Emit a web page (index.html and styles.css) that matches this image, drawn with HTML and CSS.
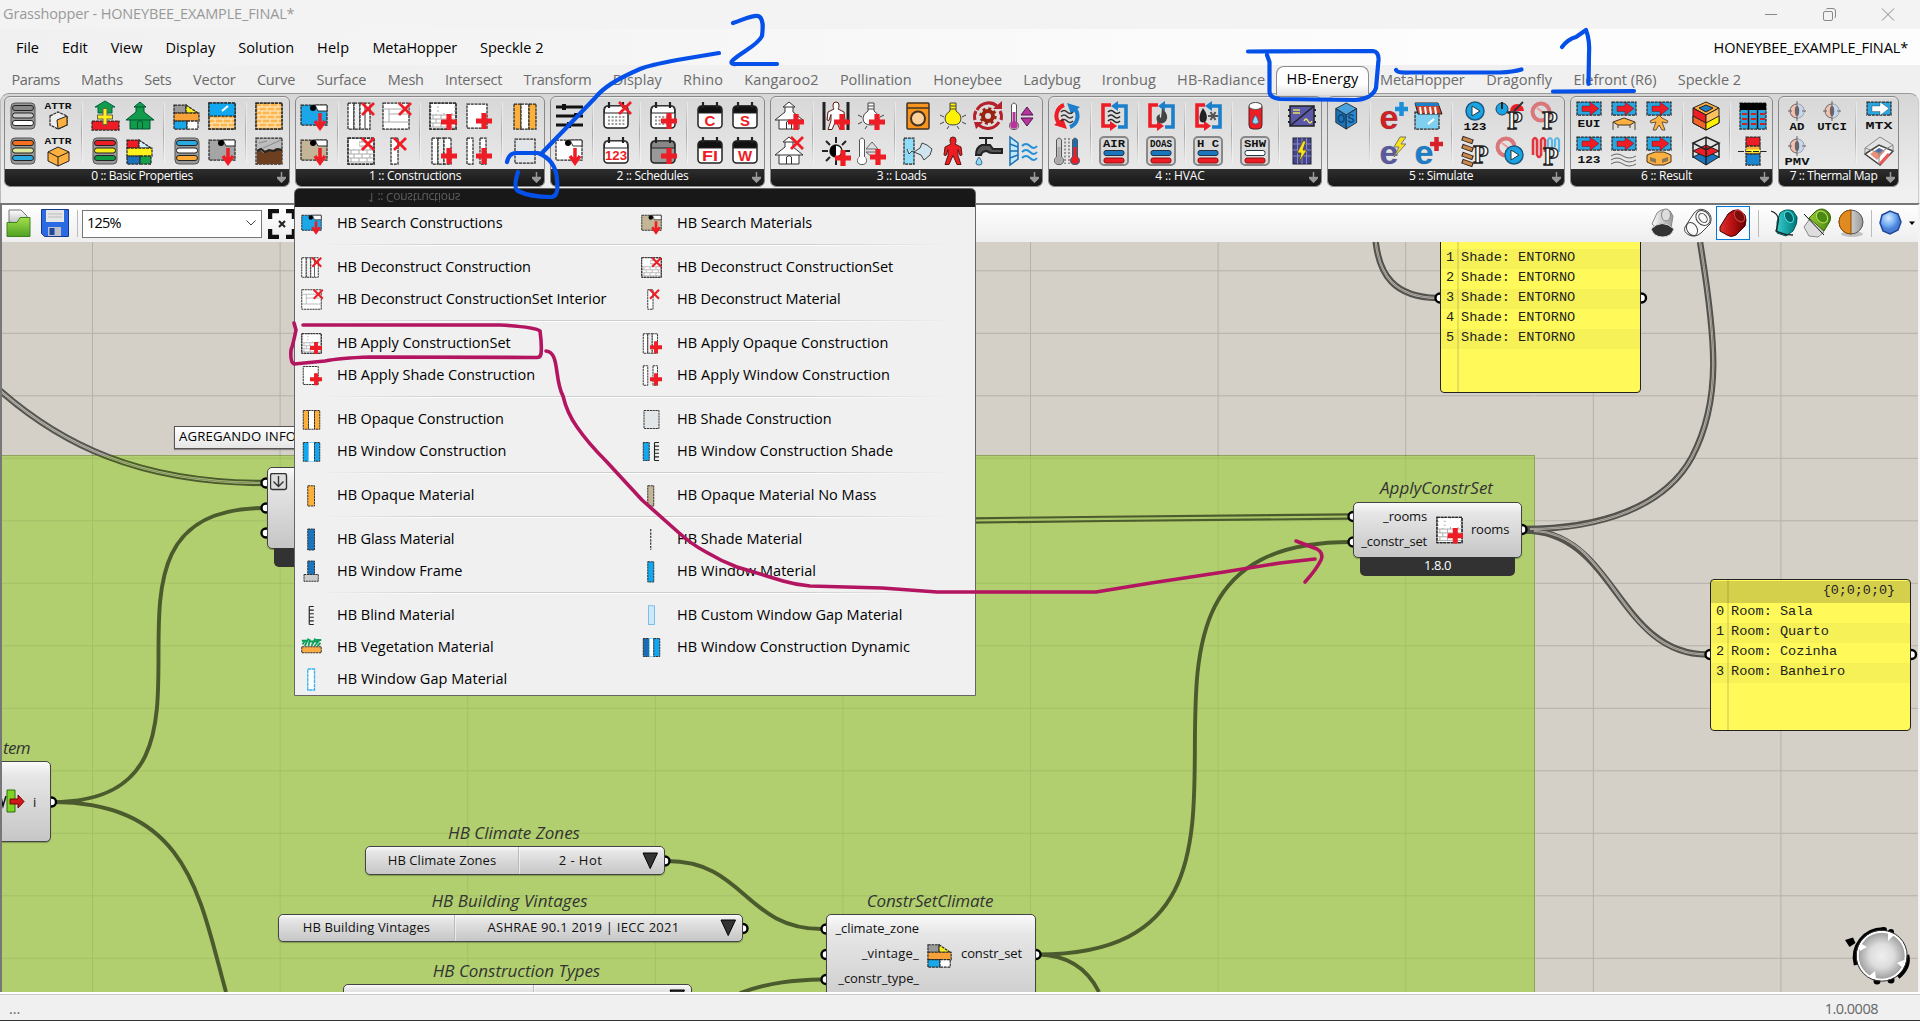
FILE: index.html
```html
<!DOCTYPE html>
<html lang="en">
<head>
<meta charset="utf-8">
<title>Grasshopper - HONEYBEE_EXAMPLE_FINAL*</title>
<link rel="stylesheet" href="styles.css">
</head>
<body>
<div class="window">
  <header class="titlebar">
    <span class="t" data-w="291">Grasshopper - HONEYBEE_EXAMPLE_FINAL*</span>
    <svg class="winbtns" viewBox="0 0 160 29"><path d="M5 14.500h12"/><rect x="63.500" y="11.500" width="9" height="9" rx="1.500"/><path d="M66 9.500q.5-1 2-1h5q2.500 0 2.500 2.500v5q0 1.500-1 2M122 8.500l12 12M134 8.500l-12 12"/></svg>
  </header>
  <nav class="menubar" id="menubar"></nav>
  <nav class="tabs" id="tabs"></nav>
  <section class="ribbon" id="ribbon"></section>

  <main class="editor">
    <div class="toolbar">
      <svg class="tb-left" viewBox="2 203 76 39">
        <defs><linearGradient id="gf" x2="0" y2="1"><stop stop-color="#a4e04c"/><stop offset="1" stop-color="#4ea024"/></linearGradient>
        <linearGradient id="gd" x2="0" y2="1"><stop stop-color="#fff"/><stop offset="1" stop-color="#bbb"/></linearGradient></defs>
        <path d="M9 222v-12h12l6 6v8z" fill="url(#gd)" stroke="#777"/><path d="M7 236.500v-14h10l3-5h10v19z" fill="url(#gf)" stroke="#3f8320"/>
        <path d="M41.500 209.500h27v27h-24l-3-3z" fill="#2a6be4" stroke="#15398f"/><path d="M46 210h18v12h-18z" fill="#e6e6e6"/><path d="M48 214h14M48 217h14" stroke="#bbb"/><path d="M48 227h13v9h-13z" fill="#bcc0c8"/><path d="M49.500 228h5v7h-5z" fill="#1d489f"/>
      </svg>
      <span class="rule"></span>
      <div class="combo"><span class="t" data-w="34">125%</span><svg viewBox="0 0 10 6"><path d="M.5.5l4.500 4.500 4.500-4.500"/></svg></div>
      <svg class="tb-extents" viewBox="0 0 28 30"><path d="M2 10V2h9M18 2h8v8M2 20v8h9M18 28h8v-8" fill="none" stroke="#111" stroke-width="4.500"/><path d="M11 12l6 6M17 12l-6 6" stroke="#222" stroke-width="2"/></svg>
      <svg class="tb-right" viewBox="1640 203 278 39">
        <defs>
          <linearGradient id="gr"><stop stop-color="#d33"/><stop offset=".4" stop-color="#c01414"/><stop offset="1" stop-color="#600"/></linearGradient>
          <linearGradient id="gt"><stop stop-color="#3cc"/><stop offset="1" stop-color="#077"/></linearGradient>
          <linearGradient id="gg"><stop stop-color="#9c3"/><stop offset="1" stop-color="#47830f"/></linearGradient>
          <linearGradient id="gw"><stop stop-color="#fff"/><stop offset="1" stop-color="#999"/></linearGradient>
          <radialGradient id="gb" cx=".4" cy=".3"><stop stop-color="#d5eaff"/><stop offset=".6" stop-color="#7db4f5"/><stop offset="1" stop-color="#4a7fd8"/></radialGradient>
        </defs>
        <path d="M1652 224l5-11q6-6 13-2l3 5-2 12-12 2z" fill="url(#gw)" stroke="#888"/><ellipse cx="1666" cy="215" rx="4.500" ry="6" fill="#ddd" stroke="#888"/><path d="M1651 229q11-11 23 0q-3 8-11.500 8t-11.500-8z" fill="#333" stroke="#ddd"/>
        <g fill="none" stroke="#444"><path d="M1685 227l9-14q6-7 14-1q5 5 2 12l-9 9q-6 5-12 2t-4-8z" fill="#fafafa"/><ellipse cx="1703" cy="218" rx="6.500" ry="8" transform="rotate(-40 1703 218)"/><ellipse cx="1703" cy="218" rx="3.500" ry="5" transform="rotate(-40 1703 218)"/><ellipse cx="1692" cy="229" rx="5" ry="7" transform="rotate(-30 1692 229)"/></g>
        <rect x="1716.500" y="206.500" width="33" height="33" fill="#f8fbff" stroke="#0078d7"/>
        <path d="M1720 227l8-13q5-5 11-4l6 5q2 5 0 11l-9 9q-5 3-9 0l-7-4z" fill="url(#gr)" stroke="#400"/><ellipse cx="1739.500" cy="216" rx="4.500" ry="6.500" transform="rotate(-35 1739.500 216)" fill="#7a0c0c" stroke="#d44"/>
        <path d="M1758.500 210v27M1871.500 210v27" stroke="#bbb"/>
        <path d="M1777 222l3-9q6-5 13-2l4 6q1 6-4 14l-7 5-9-3z" fill="url(#gt)" stroke="#055"/><ellipse cx="1789" cy="217" rx="4" ry="6" transform="rotate(-30 1789 217)" fill="#066" stroke="#4dd"/><path d="M1771 211q9 3 7 12t-2 8q8 4 17 4" fill="none" stroke="#222" stroke-width="1.300"/>
        <path d="M1804 227l7-10 13 15-6 5-9-1z" fill="#ddd" stroke="#888"/><path d="M1809 218l7-7q6-4 11 0 5 4 3 10l-6 10z" fill="url(#gg)" stroke="#360"/><ellipse cx="1822" cy="217" rx="5" ry="6.500" transform="rotate(-40 1822 217)" fill="#4a8a10" stroke="#bde06a"/><path d="M1804 214l20 21" stroke="#111"/>
        <ellipse cx="1852" cy="234" rx="11" ry="3" fill="#0003"/><circle cx="1851" cy="222" r="12" fill="url(#gw)" stroke="#555"/><path d="M1851 210a12 12 0 0 0 0 24z" fill="#e08a20" stroke="#8a4a00"/>
        <path d="M1882 215l8-4 8 3 3 8-3 8-8 4-7-3-3-8z" fill="url(#gb)" stroke="#1f4699" stroke-width="1.500"/><path d="M1909 221.500h6l-3 3.500z"/>
      </svg>
    </div>

    <div class="canvas">
      <svg class="wires" viewBox="2 242 1916 750">
        <defs>
          <pattern id="grid" x="92" y="207.800" width="187.600" height="62.500" patternUnits="userSpaceOnUse"><path d="M.5 0v62.500M0 .5h187.600" stroke="#00000026" fill="none"/></pattern>
          <linearGradient id="in" gradientUnits="userSpaceOnUse" x1="0" x2="0" y1="455" y2="456"><stop stop-color="#c5c1b9"/><stop offset="1" stop-color="#a8c568"/></linearGradient>
          <linearGradient id="out" gradientUnits="userSpaceOnUse" x1="0" x2="0" y1="455" y2="456"><stop stop-color="#565651"/><stop offset="1" stop-color="#4b5b2d"/></linearGradient>
          <radialGradient id="ball"><stop stop-color="#efefef"/><stop offset=".5" stop-color="#ddd"/><stop offset="1" stop-color="#9c9c9c"/></radialGradient>
        </defs>
        <rect x="0" y="455.500" width="1534.500" height="600" fill="#b1cf6e" stroke="#8ea45c"/>
        <rect x="0" y="242" width="1534" height="214" fill="url(#grid)"/><rect x="1535" y="242" width="390" height="760" fill="url(#grid)"/><rect x="0" y="456" width="1534" height="540" fill="url(#grid)" opacity=".5"/>
        <g class="single">
          <path d="M52 802C265 802 52 508 265 508M52 802C190 802 200 900 226 992M1038 954.500C1350 954.500 1040 542 1351 542M1038 954.500C1070 955 1088 970 1099 992M667 861C745 861 745 929 822 929M740 993C770 982 795 980 822 979.500"/>
        </g>
        <g class="dbl">
          <g stroke="url(#out)"><path d="M-5 386C60 445 140 483 265 483"/></g><g class="inner" stroke="url(#in)"><path d="M-5 386C60 445 140 483 265 483"/></g>
          <path d="M970 520.500C1100 519 1200 517.500 1351 516.500" stroke="#4b5b2d"/><path class="inner" d="M970 520.500C1100 519 1200 517.500 1351 516.500" stroke="#a8c568"/>
          <g stroke="#53524d"><path d="M1524 529C1600 529 1665 507 1692 457C1722 400 1716 340 1700 242M1524 530.500C1615 530 1617 654 1707 654.500M1375.500 240C1379 275 1394 297 1437 298"/></g>
          <g class="inner" stroke="#bdb9b1"><path d="M1530 529C1600 529 1665 507 1692 457C1722 400 1716 340 1700 242M1534 531C1615 534 1617 654 1707 654.500M1375.500 240C1379 275 1394 297 1437 298"/></g>
          <g class="core" stroke="#7d7a74"><path d="M1530 529C1600 529 1665 507 1692 457C1722 400 1716 340 1700 242M1534 531C1615 534 1617 654 1707 654.500M1375.500 240C1379 275 1394 297 1437 298M-5 386C60 445 140 483 265 483"/></g>
        </g>
        <g class="ports">
          <circle cx="266" cy="483" r="4.500"/><circle cx="266" cy="508" r="4.500"/><circle cx="266" cy="533" r="4.500"/><circle cx="51.500" cy="802" r="4.500"/>
          <circle cx="1353" cy="516.500" r="4.500"/><circle cx="1353" cy="542" r="4.500"/><circle cx="1522" cy="529.500" r="4.500"/>
          <circle cx="1440" cy="298" r="4.500"/><circle cx="1641.500" cy="298" r="4.500"/><circle cx="1710" cy="654.500" r="4.500"/><circle cx="1911.500" cy="654.500" r="4.500"/>
          <circle cx="826" cy="929" r="4.500"/><circle cx="826" cy="954.500" r="4.500"/><circle cx="826" cy="979.500" r="4.500"/><circle cx="1036" cy="954.500" r="4.500"/>
          <circle cx="665" cy="861" r="4.500"/><circle cx="743" cy="928.500" r="4.500"/>
        </g>
        <path d="M1845 940l8-2.500 2.500 5.500-6 4z"/><path d="M1856 965a28 28 0 0 1 28-35.500M1907 955q3 12-9 22" fill="none" stroke="#000" stroke-width="4.500"/><circle cx="1884" cy="930" r="3"/><circle cx="1891" cy="932" r="3"/><circle cx="1877" cy="981" r="3.500"/><circle cx="1891" cy="980" r="3.500"/>
        <circle cx="1881.700" cy="955.700" r="24" fill="url(#ball)" stroke="#fff" stroke-width="2"/><circle cx="1881.700" cy="955.700" r="25.500" fill="none" stroke="#333"/>
        <path d="M1888 932l6 3-6 6zM1860 943l7 4-7 4zM1904 960l-7 3 6 5zM1875 971l1 8-7-3z" fill="#fff"/>
      </svg>

      <div class="scribble">AGREGANDO INFORMACION</div>

      <div class="node item"><span class="nick t" data-w="27">tem</span>
        <svg viewBox="0 0 24 26"><path d="M0 8l2 9 3-10" fill="none" stroke="#111" stroke-width="1.500"/><path d="M6 1h8v22h-8z" fill="#7fd321" stroke="#2f6d10"/><path d="M9 10h8v-4l6 6.500-6 6.500v-4h-8z" fill="#d01818" stroke="#700"/></svg><span>i</span></div>

      <div class="node merge"><svg viewBox="0 0 18 18"><rect x=".5" y=".5" width="16" height="16" rx="2"/><path d="M8.500 3v10M3.500 8.500l5 5 5-5"/></svg><div class="version"></div></div>

      <div class="node apply">
        <span class="nick t" data-w="113">ApplyConstrSet</span>
        <div class="inputs"><span class="t" data-w="44">_rooms</span><span class="t" data-w="66">_constr_set</span></div>
        <svg class="nodeicon" viewBox="0 0 28 28" data-icon="appCS"></svg>
        <span class="t out" data-w="38">rooms</span>
        <div class="version"><span class="t" data-w="27">1.8.0</span></div>
      </div>

      <div class="node climate">
        <span class="nick t" data-w="127">ConstrSetClimate</span>
        <div class="inputs"><span class="t" data-w="84">_climate_zone</span><span class="t" data-w="57">_vintage_</span><span class="t" data-w="81">_constr_type_</span></div>
        <svg class="nodeicon" viewBox="0 0 28 28" data-icon="blocks"></svg>
        <span class="t" data-w="61">constr_set</span>
      </div>

      <div class="node list zones"><span class="nick t" data-w="132">HB Climate Zones</span><span class="name"><span class="t" data-w="108">HB Climate Zones</span></span><span class="value"><span class="t" data-w="43">2 - Hot</span></span><svg viewBox="0 0 17 18"><path d="M1 1h14.500l-7.300 15.500z"/></svg></div>
      <div class="node list vintages"><span class="nick t" data-w="156">HB Building Vintages</span><span class="name"><span class="t" data-w="127">HB Building Vintages</span></span><span class="value"><span class="t" data-w="192">ASHRAE 90.1 2019 | IECC 2021</span></span><svg viewBox="0 0 17 18"><path d="M1 1h14.500l-7.300 15.500z"/></svg></div>
      <div class="node list types"><span class="nick t" data-w="167">HB Construction Types</span><span class="name"></span><span class="value"></span><svg viewBox="0 0 17 18"><path d="M1 1h14.500l-7.300 15.500z"/></svg></div>

      <div class="panel shades">
        <div class="row"><i>1</i><span>Shade: ENTORNO</span></div><div class="row"><i>2</i><span>Shade: ENTORNO</span></div><div class="row"><i>3</i><span>Shade: ENTORNO</span></div><div class="row"><i>4</i><span>Shade: ENTORNO</span></div><div class="row"><i>5</i><span>Shade: ENTORNO</span></div>
      </div>
      <div class="panel rooms">
        <div class="path">{0;0;0;0}</div>
        <div class="row"><i>0</i><span>Room: Sala</span></div><div class="row"><i>1</i><span>Room: Quarto</span></div><div class="row"><i>2</i><span>Room: Cozinha</span></div><div class="row"><i>3</i><span>Room: Banheiro</span></div>
      </div>
    </div>
  </main>

  <footer class="status"><span>...</span><span class="t" data-w="53">1.0.0008</span></footer>

  <div class="dropdown">
    <div class="head"><span class="t" data-w="92">1 :: Constructions</span></div>
    <div id="items"></div>
  </div>

  <svg class="ink" viewBox="0 0 1920 1021">
    <g class="blue">
      <path d="M733 23C745 19 752 15 758 16C764 18 763 28 762 36C758 45 742 52 733 60C730 63 732 64.500 736 64L777 64"/>
      <path d="M719 53L677 60Q650 65 640 69C615 80 603 88 595 98L541 154"/>
      <path d="M507 162Q509 153 516 153L538 153Q556 160 557 180Q559 197 551 197Q530 197 518 191Q513 188 518 172"/>
      <path d="M1248 51.500L1373 51Q1379 52 1378.500 60L1376 88Q1372 99 1355 100L1280 99Q1270 98 1269.500 92L1269.500 62L1267 55"/>
      <path d="M1396 70Q1397 73 1410 72.500L1500 72.500Q1513 72 1521.500 69.500"/><path d="M1562 47Q1568 39 1576 37L1586 30Q1590 40 1589 55L1588.500 84"/><path d="M1553 91.500L1634 91"/>
    </g>
    <g class="pink">
      <path d="M303 325L500 325Q535 327 540 331Q542 345 541 354Q540 358 536 357.500L370 357Q340 358 325 361L294 364Q290 362 291 350Q293 345 296 330L294 323"/>
      <path d="M546 351C560 352 554 380 563 396Q567 413 577 427Q588 443 606 461L642 500L678 532Q691 544 706 552Q721 561 737 567L783 581Q797 585 810 586L882 588L937 592L1096 592L1151 583L1224 572L1280 563L1315 559"/>
      <path d="M1296 541L1317 549Q1324 553 1321 560Q1316 570 1305 582"/>
    </g>
  </svg>
</div>
<script src="app.js"></script>
</body>
</html>
```
FILE: styles.css
```css
* { box-sizing: border-box; }
body { margin: 0; overflow: hidden; background: #f0f0f0; font: 14.5px/20px "Open Sans", "Noto Sans", sans-serif; color: #000; }
.window { position: relative; width: 1920px; height: 1021px; display: flex; flex-direction: column; overflow: hidden; }
.t { display: inline-block; white-space: nowrap; }

.titlebar { height: 29px; display: flex; justify-content: space-between; padding: 4px 0 0 3px; background: #f3f3f3; color: #999; }
.winbtns { width: 160px; height: 29px; margin-top: -4px; fill: none; stroke: #888; }
.menubar { height: 36px; display: flex; gap: 23px; padding: 9px 12px 0 16px; background: linear-gradient(90deg, #f0f0f0, #fdfdfd 75%); }
.menubar .t:last-child { margin-left: auto; }
.tabs { height: 28px; display: flex; padding-left: 1px; color: #6b6b6b; }
.tabs .tab { height: 28px; padding: 5px 0 0; text-align: center; white-space: nowrap; }
.tabs .on { position: relative; z-index: 1; height: 29px; padding-top: 2px; margin-top: 1px; color: #000; background: linear-gradient(#fff 60%, #e2e2e2); border: 1px solid #8c8c8c; border-bottom: 0; border-radius: 8px 8px 0 0; }

.ribbon { height: 110px; display: flex; gap: 5px; padding: 2px 4px 0 3px; border: 1px solid #999; border-bottom: 0; border-left-color: #bbb; border-right-color: #ccc; border-radius: 9px 9px 0 0; margin: 0 1px 0 0; background: linear-gradient(#d6d6d6, #f0f0f0 90%); align-items: flex-start; }
.group { height: 91px; display: flex; flex-direction: column; border: 1px solid #888; border-radius: 6px; overflow: hidden; background: linear-gradient(#d8d8d8, #ececec); box-shadow: inset 0 1px #fff8; flex: none; }
.icons { height: 73px; display: flex; gap: 12px; padding: 1px 1px 0 0; }
.cluster { display: grid; grid-template-rows: 35px 35px; grid-auto-columns: 35px; grid-auto-flow: column; place-items: center; position: relative; }
.cluster + .cluster::before { content: ""; position: absolute; left: -6px; top: 4px; width: 1px; height: 62px; background: linear-gradient(#0000, #aaa, #0000); box-shadow: 1px 0 #fff6; }
.cluster svg { width: 28px; height: 28px; overflow: visible; }
.caption { height: 17px; position: relative; background: linear-gradient(#2e2e2e, #161616); color: #fff; font-size: 12px; line-height: 14px; text-align: center; padding-right: 10px; }
.caption svg { position: absolute; right: 3px; top: 3px; width: 9px; height: 11px; }
text { font-family: "Liberation Mono", monospace; font-weight: 700; }
text.sans { font-family: "Liberation Sans", sans-serif; }
text.serif { font-family: "Liberation Serif", serif; }

.editor { height: 789px; display: flex; flex-direction: column; border: solid #777; border-width: 2px 0 0 2px; border-right: 2px solid #f4f4f4; }
.toolbar { height: 37px; display: flex; align-items: center; background: linear-gradient(#fff, #eee); }
.tb-left { width: 76px; height: 39px; margin-top: -2px; }
.rule { width: 1px; height: 27px; background: #bbb; margin: 0 4px 0 -1px; }
.combo { width: 180px; height: 28px; display: flex; align-items: center; justify-content: space-between; border: 1px solid #777; background: #fff; padding: 0 5px 2px 4px; }
.combo svg { width: 10px; height: 6px; fill: none; stroke: #444; overflow: visible; }
.tb-extents { width: 28px; height: 30px; margin-left: 6px; }
.tb-right { width: 278px; height: 39px; margin: -2px 0 0 auto; }
.canvas { position: relative; flex: 1; overflow: hidden; background: #d4d0c8; }
.wires { position: absolute; inset: 0; width: 1916px; height: 750px; }
.single { fill: none; stroke: #4b5b2d; stroke-width: 3.9; }
.dbl { fill: none; stroke-width: 6.4; }
.dbl .inner { stroke-width: 2.2; }
.dbl .core { stroke-width: .8; }
.ports { fill: #fff; stroke: #000; stroke-width: 2.4; }

.node { position: absolute; display: flex; align-items: center; border: 1.5px solid #444; border-radius: 5px; background: linear-gradient(#fafafa, #e6e6e6 18%, #c6c6c6); font-size: 13px; line-height: 18px; color: #111; box-shadow: 0 1px 1px #0004; }
.nick { position: absolute; left: calc(50% - 1px); transform: translateX(-50%); top: -26px; font-size: 17px; line-height: 24px; font-style: italic; color: #333; }
.version { position: absolute; top: 100%; left: 6px; right: 6px; height: 19px; background: #323232; color: #fff; border-radius: 0 0 5px 5px; text-align: center; line-height: 17px; }
.inputs { display: flex; flex-direction: column; align-items: flex-end; flex: none; }
.nodeicon { flex: none; }
.apply { left: 1351px; top: 260px; width: 169px; height: 56px; }
.apply .nick { top: -27px; }
.apply .inputs { width: 73px; gap: 7px; padding-bottom: 4px; }
.apply .out { margin-bottom: 3px; }
.apply .nodeicon { width: 27px; height: 28px; margin: 0 8px 1px 9px; }
.climate { left: 824px; top: 672px; width: 210px; height: 106px; align-items: flex-start; }
.climate .inputs { width: 92px; gap: 7px; padding-top: 4px; }
.climate .nodeicon { width: 26px; height: 26px; margin: 27px 8px 0; }
.climate > .t:last-child { margin-top: 29px; }
.list .name { height: 100%; display: flex; align-items: center; justify-content: center; border-right: 1px solid #bbb; box-shadow: 1px 0 #fff8; flex: none; padding-bottom: 2px; }
.list .value { flex: 1; display: flex; justify-content: center; padding-bottom: 2px; }
.list svg { width: 17px; height: 18px; margin-right: 5px; fill: #333; stroke: #000; }
.zones { left: 363px; top: 604px; width: 300px; height: 29px; }
.zones .name { width: 153px; }
.vintages { left: 276px; top: 672px; width: 465px; height: 28px; }
.vintages .name { width: 176px; }
.vintages .value { padding-right: 8px; }
.types { left: 341px; top: 742px; width: 349px; height: 28px; }
.types .name { width: 190px; }
.item { left: -40px; top: 519px; width: 89px; height: 81px; padding-left: 38px; }
.item .nick { left: auto; right: 20px; transform: none; }
.item svg { width: 24px; height: 26px; margin-right: 8px; }
.merge { left: 265px; top: 225px; width: 100px; height: 82px; }
.merge svg { width: 18px; height: 18px; position: absolute; left: 2px; top: 5px; fill: #ddd; stroke: #333; stroke-width: 1.4; }
.scribble { position: absolute; left: 172px; top: 184px; width: 220px; height: 23px; border: 1.5px solid #555; background: linear-gradient(#fff, #e6e6e6); padding-left: 4px; font-size: 13.2px; line-height: 18px; white-space: nowrap; letter-spacing: .15px; box-shadow: 0 1px 1px #0005; }

.panel { position: absolute; border: 1.5px solid #222; border-radius: 4px; background: linear-gradient(90deg, #0000 16px, #e6df55 16px, #e6df55 18px, #0000 18px) #fffa5a; font: 13.6px/20px "Liberation Mono", monospace; color: #222; overflow: hidden; }
.panel .row { height: 20px; display: flex; gap: 7px; padding-left: 5px; line-height: 18px; }
.panel i { font-style: normal; width: 8px; }
.shades { left: 1438px; top: -20px; width: 201px; height: 171px; padding-top: 26px; }
.shades .row:nth-child(odd), .rooms .row:nth-child(odd) { background: #00000009; }
.rooms { left: 1708px; top: 337px; width: 201px; height: 152px; padding-top: 1px; }
.rooms .path { height: 22px; background: #0000002a; text-align: right; padding-right: 15px; line-height: 19px; font-size: 13.4px; }

.status { height: 29px; display: flex; justify-content: space-between; padding: 5px 42px 0 9px; border-top: 2px solid #fff; border-bottom: 1px solid #333; box-shadow: inset 0 1px #ccc; color: #666; }

.dropdown { position: absolute; left: 294px; top: 188px; width: 682px; height: 508px; background: #f0f0f0; border: 1px solid #666; border-radius: 5px 5px 0 0; overflow: hidden; }
.head { height: 18px; background: #181818; color: #777; font-size: 12px; line-height: 16px; padding-left: 73px; }
.head .t { transform: scaleY(-1); opacity: .75; }
.item-row { display: grid; grid-template-columns: 340px 1fr; height: 32px; }
.item-row > div { display: flex; align-items: center; gap: 15px; padding-left: 6px; }
.item-row svg { width: 21px; height: 21px; overflow: visible; }
.gap { height: 12px; display: flex; align-items: center; }
.gap::after { content: ""; height: 2px; width: 630px; margin-left: 26px; background: linear-gradient(#ccc 50%, #fff 50%); mask-image: linear-gradient(90deg, #0000, #000 20%, #000 75%, #0000); }

.ink { position: absolute; inset: 0; width: 1920px; height: 1021px; pointer-events: none; fill: none; stroke-linecap: round; stroke-linejoin: round; }
.blue { stroke: #0550e8; stroke-width: 4.2; }
.pink { stroke: #b31560; stroke-width: 3.6; }
```
FILE: app.js
```js
// ---------- icon parts (28 x 28 box) ----------
const D = 'stroke="#2a2a2a" stroke-width="1.250" stroke-dasharray="3 .8"';
const rect = (x, y, w, h, f, extra = D) => `<rect x="${x}" y="${y}" width="${w}" height="${h}" fill="${f}" ${extra}/>`;
const txt = (s, x, y, size, fill = '#111', cls = '', len = 0) => `<text class="${cls}" x="${x}" y="${y}" font-size="${size}" fill="${fill}" text-anchor="middle"${len ? ` textLength="${len}" lengthAdjust="spacingAndGlyphs"` : ''}>${s}</text>`;
const plus = (x = 20, y = 20) => `<path d="M${x - 8} ${y}h16M${x} ${y - 8}v16" stroke="#ee1c25" stroke-width="5.200" fill="none"/>`;
const cross = (x = 21, y = 7) => `<path d="M${x - 6} ${y - 6}l12 12M${x + 6} ${y - 6}l-12 12" stroke="#ee1c25" stroke-width="2.800" fill="none"/>`;
const bars = (a, b, c) => `<rect x="2" y="1" width="24" height="26" rx="4" fill="#999" stroke="#555"/>` + [a, b, c].map((f, i) => `<rect x="3.500" y="${3.500 + i * 7.500}" width="21" height="5" rx="2.500" fill="${f}" stroke="#222"/>`).join('');
const card = f => `${rect(1, 3, 26, 20, f)}<path d="M15 3h12v6h-9z" fill="#fff" stroke="#333"/><circle cx="13" cy="6" r="3"/><path d="M20 11v13M15 19l5 7 5-7" stroke="#ee1c25" stroke-width="3.500" fill="none"/>`;
const house = (f, o = '#333') => `<path d="M14 0l6 5h-2v5l10 8h-4v9h-20v-9h-4l10-8v-5h-2z" fill="${f}" stroke="${o}"/><path d="M10 5h8M4 18h20M11.500 27v-7q2.500-3 5 0v7" fill="none" stroke="${o}"/>`;
const cal = (top, body, s) => `<rect x="2" y="4" width="24" height="22" rx="3.500" fill="${body}" stroke="#222" stroke-width="1.500"/><path d="M2.500 11v-3q0-4 4-4h15q4 0 4 4v3z" fill="${top}" stroke="#222"/><path d="M7 0v6M21 0v6" stroke="#222" stroke-width="2.200"/>${s}`;
const dots = `<path d="M6 15h17M6 18.500h17M6 22h17" stroke="#999" stroke-width="2" stroke-dasharray="2 1.600"/>`;
const bricks = (x, y, w, h, f, l) => { let s = rect(x, y, w, h, f), n = 0; for (let j = y + 4; j < y + h; j += 4, n++) s += `<path d="M${x} ${j}h${w}" stroke="${l}"/><path d="M${x + (n % 2 ? 3 : 6)} ${j - 4}v4" stroke="${l}" /><path d="M${x + (n % 2 ? 11 : 14)} ${j - 4}v4M${x + (n % 2 ? 19 : 22)} ${j - 4}v4" stroke="${l}"/>`; return s + rect(x, y, w, h, 'none'); };
const bulb = f => `<path d="M11 9v-8h6v8q5 3 5 7 0 7-8 7t-8-7q0-4 5-7z" fill="${f}" stroke="#444"/><path d="M11 4h6M11 7h6M1 13l4 2M27 13l-4 2M1 22l4-2M27 22l-4-2M8 27l2-3M20 27l-2-3" stroke="#444"/>`;
const man = f => `<path d="M14 0q3 0 3 3t-1 4l6 3 1 8-2 .5-2-6v6l3 9h-4l-4-9-4 9h-4l3-9v-6l-2 6-2-.5 1-8 6-3q-1-1-1-4t3-3z" fill="${f}" stroke="#5a1a10"/>`;
const loop = s => `<path d="M11 3h-8v21h9" fill="none" stroke="#ee1c25" stroke-width="3.600"/><path d="M10 19l7 5-7 5z" fill="#ee1c25"/><path d="M18 25h8v-21h-9" fill="none" stroke="#1b7fcb" stroke-width="3.600"/><path d="M18-1l-7 5 7 5z" fill="#1b7fcb"/>${s}`;
const waves = (x, y, c) => `<path d="M${x} ${y}q3-3 6 0t6 0M${x} ${y + 4.500}q3-3 6 0t6 0M${x} ${y + 9}q3-3 6 0t6 0" fill="none" stroke="${c}" stroke-width="1.600"/>`;
const badge = (s, a, b) => `<rect x="0" y="0" width="28" height="28" rx="4" fill="#d9d9d9" stroke="#888" stroke-width="2"/>${txt(s, 14, 10, 10, '#111', '', 22)}<rect x="4" y="13.500" width="20" height="5" rx="2" fill="${a}" stroke="#234"/><rect x="4" y="21" width="20" height="5" rx="2" fill="${b}" stroke="#811"/>`;
const ther = (x, f, m = '#fff') => `<path d="M${x - 2.500} 20v-17q2.500-4 5 0v17q2 1 2 3.500 0 4-4.500 4t-4.500-4q0-2.500 2-3.500z" fill="${m}" stroke="#555"/><path d="M${x - 1.500} 10h3v10h-3z" fill="${f}"/><circle cx="${x}" cy="23" r="3.800" fill="${f}"/>`;
const P = (x = 19, y = 27) => `<text class="serif" x="${x}" y="${y}" font-size="25" fill="#fff" stroke="#222" stroke-width="1.300" text-anchor="middle">P</text>`;
const play = (x, y, r) => `<circle cx="${x}" cy="${y}" r="${r}" fill="#19a4e6" stroke="#1c5b80" stroke-width="1.500"/><path d="M${x - 3} ${y - 5}l8 5-8 5z" fill="#fff" stroke="#333"/>`;
const ring = (x, y) => `<circle cx="${x}" cy="${y}" r="8.500" fill="none" stroke="#d9777b" stroke-width="4"/><path d="M${x - 4} ${y - 4}l8 6" stroke="#e99" stroke-width="2"/>`;
const res = (s, a = '#ee1c25') => `${rect(2, 0, 24, 13, '#2aa5e0')}<path d="M7 4h8v-4l9 6.500-9 7v-4h-8z" fill="${a}" stroke="#0004"/>${s}`;
const comfort = s => `<circle cx="14" cy="9" r="7" fill="#f5c0b0" stroke="#666"/><path d="M14 2a7 7 0 0 1 0 14z" fill="#c5d6ee"/><path d="M14-1v20M5 9h4M19 9h4" stroke="#666"/><ellipse cx="14" cy="9" rx="2.200" ry="5" fill="#666"/>${txt(s, 14, 28, 11, '#111', '', s.length === 3 ? 25 : s.length * 7.400)}`;
const e = (c, s) => `<text class="sans" x="10" y="27" font-size="34" fill="${c}" stroke="#3335" stroke-width=".6" text-anchor="middle">e</text>${s}`;
const cross2 = c => `<path d="M16 7h13M22.500 0v14" stroke="${c}" stroke-width="4.500"/>`;
const bolt = `<path d="M21 0l-6 10h5l-5 10 12-13h-5l5-7z" fill="#ffe11a" stroke="#776"/>`;
const blocks = (a, b, c, d, e2) => `${rect(1, 3, 12, 8, a)}<path d="M13 3l12 8h-12z" fill="${b}" ${D}/>${rect(1, 11, 25, 8, c)}${rect(1, 19, 13, 8, d)}${rect(14, 19, 11, 8, e2)}`;
const cube = (t, l, r, extra = '') => `<path d="M14 0l13 6-13 7-13-7z" fill="${t}" stroke="#222"/><path d="M1 6v15l13 7v-15z" fill="${l}" stroke="#222"/><path d="M27 6v15l-13 7v-15z" fill="${r}" stroke="#222"/>${extra}`;
const steps = y => `<path d="M${y} 2v24" stroke="#222" stroke-width="1.500"/><path d="M${y} 2h6M${y} 6.800h6M${y} 11.600h6M${y} 16.400h6M${y} 21.200h6M${y} 26h6" stroke="#222" stroke-width="1.500"/>`;

const icons = {
  barsG: bars('#888', '#c8c8c8', '#fff'), barsO: bars('#f37021', '#dfe8a0', '#29abe2'), barsR: bars('#ee1c25', '#f5ee1c', '#0f9a46'), barsB: bars('#29abe2', '#fff', '#fbab35'),
  attr1: txt('ATTR', 14, 7, 9.500, '#111', '', 27) + `<path d="M6 14l8-4 9 4v9l-9 4-8-4z" fill="#eee" ${D}/><path d="M13 18l10-4v9l-9 4z" fill="#fbb040" stroke="#222"/>`,
  attr2: txt('ATTR', 14, 7, 9.500, '#111', '', 27) + `<path d="M4 15l10-5 11 5v9l-11 5-10-5z" fill="#fbb040" stroke="#222"/><path d="M4 15l10 5 11-5M14 20v9" fill="none" stroke="#222"/>`,
  housePlus: `<path d="M14-1l10 6h-3v6h-14v-6h-3z" fill="#109c4b" stroke="#064"/>${rect(1, 19, 27, 9, '#ee1c25')}<path d="M6 15h16M14 6v17" stroke="#664" stroke-width="5"/><path d="M7 15h14M14 7v15" stroke="#ffee20" stroke-width="3"/>`,
  house: house('#109c4b', '#053'), blocks: blocks('#999', '#f5ee1c', '#f7a239', '#18a8e8', '#fff'), blocks2: blocks('#ee1c25', '#d5f0fa', '#fff21a', '#1a72bd', '#17a04c'),
  winbrick: bricks(1, 1, 26, 26, '#fdb64e', '#fff0d0') + rect(1, 1, 26, 13, '#12a8f0') + '<path d="M14 9l6-5" stroke="#fff" stroke-width="2"/>',
  brick: bricks(1, 1, 26, 26, '#fdb64e', '#fff0d0'), soil: rect(1, 1, 26, 26, '#bdbdbd') + '<path d="M2 15l3-2 4 3 3-3 5 1 4-3 6 2v14h-25z" fill="#6b3f1f"/><path d="M2 14l4-2 4 3 4-2 5 1 4-2 4 1" fill="none" stroke="#222" stroke-width="2"/><path d="M8 11l18-8M4 6l8-2" stroke="#888"/>',
  cardG: card('#a5a5a5'), cardB: card('#1ba7e8'), cardT: card('#c4b596'), cardW: card('#fff'),
  decC: rect(1, 1, 6, 26, '#fff') + rect(7, 1, 6, 26, '#eee') + rect(13, 1, 10, 26, '#fff') + '<path d="M18 1v26" stroke="#333"/>' + cross(),
  decCS: bricks(1, 1, 26, 26, '#fff', '#aaa') + '<path d="M2 2h10v10h-10z" fill="#fff"/>' + cross(),
  decCSI: rect(1, 1, 26, 26, '#fff') + '<path d="M1 7h26M7 7v13M1 20h26M7 12h20" stroke="#aaa" fill="none"/>' + cross(23),
  decM: rect(9, 1, 7, 26, '#fff') + cross(18), appCS: bricks(1, 1, 26, 26, '#fff', '#aaa') + '<path d="M3 2h5v10h-5zM10 2h15v9h-15z" fill="#fff"/>' + plus(),
  appO: rect(3, 1, 6, 26, '#fff') + rect(9, 1, 6, 26, '#eee') + rect(15, 1, 7, 26, '#fff') + plus(20, 19), appS: rect(3, 2, 20, 24, '#fff') + plus(20, 19), appW: rect(3, 1, 6, 26, '#fff') + rect(16, 1, 6, 26, '#fff') + plus(20, 19),
  opC: rect(3, 2, 7, 25, '#fbb03b') + rect(10, 2, 8, 25, '#fff') + rect(18, 2, 7, 25, '#fbb03b'), shC: rect(4, 2, 20, 24, '#e3e6e9'),
  sliders: '<path d="M1 5h27M1 14h27M1 23h27" stroke="#111" stroke-width="3"/><path d="M9 2v6M21 11v6M14 20v6" stroke="#111" stroke-width="4"/>',
  calX: cal('#fff', '#fff', dots + cross(23, 6)), cal123: cal('#fff', '#fff', txt('123', 14, 23, 13, '#ee1c25', 'sans', 22)), calP: cal('#fff', '#fff', dots + plus(20, 19)), calPD: cal('#888', '#999', dots + plus(20, 19)),
  calC: cal('#111', '#fff', txt('C', 14, 24, 15, '#ee1c25', 'sans')), calS: cal('#111', '#fff', txt('S', 14, 24, 15, '#ee1c25', 'sans')), calFI: cal('#111', '#fff', txt('FI', 14, 24, 15, '#ee1c25', 'sans', 16)), calW: cal('#111', '#fff', txt('W', 14, 24, 15, '#ee1c25', 'sans')),
  houseP: house('#fff') + plus(21, 20), houseX: house('#fff') + cross(22, 6),
  manP: '<path d="M2 0v28M26 0v28" stroke="#222" stroke-width="3"/>' + man('#fff') + plus(20, 20), bulbP: bulb('#fff') + plus(20, 20),
  sunP: '<path d="M14 0v6M14 22v6M0 14h6M22 14h6M4 4l4 4M24 4l-4 4M4 24l4-4" stroke="#222" stroke-width="2"/><circle cx="14" cy="14" r="6" fill="#fff" stroke="#222" stroke-width="1.500"/><path d="M14 8a6 6 0 0 0 0 12z"/>' + plus(21, 21),
  therP: ther(5, '#fff') + '<path d="M9 12l6-7 6 7zM9 15h12l-5 6z" fill="#ddd" stroke="#666"/>' + plus(21, 20),
  washer: '<rect x="3" y="1" width="22" height="26" rx="1" fill="#f7941e" stroke="#432" stroke-width="1.500"/><path d="M3 6h22" stroke="#432" stroke-width="1.500"/><circle cx="14" cy="16.500" r="7" fill="#fcd09a" stroke="#432" stroke-width="2"/>',
  bulb: bulb('#fff200'), gear: '<path d="M25 20a13 13 0 0 1-20 3M3 8a13 13 0 0 1 20-4M1 18a12 12 0 0 1 1-9M26 9a12 12 0 0 1 1 9" fill="none" stroke="#b5202a" stroke-width="3"/><path d="M19 7h9v-8zM0 20h9l-7 7z" fill="#b5202a"/><circle cx="14" cy="14" r="5" fill="none" stroke="#921" stroke-width="4"/><circle cx="14" cy="14" r="7.500" fill="none" stroke="#921" stroke-width="2.500" stroke-dasharray="3 2.900"/>',
  thermo: ther(5, '#b5359a') + '<path d="M12 13l6-8 6 8zM12 16h12l-6 8z" fill="#b5359a" stroke="#515"/>',
  vent: rect(0, 1, 10, 26, '#8fdcf8') + '<path d="M10 15l6-4 2-5 5 2 5 4-2 6-6 5-3-5zM3 12l2 5 3-3 3 2" fill="#cfe4ee" stroke="#444"/>', man: man('#ee1c25'),
  tap: '<path d="M5 1h14M12 1v7M7 8h9l3 4h9v4h-10q-3 0-5-2-5 0-6 4h-5q0-8 6-10z" fill="#555" stroke="#222" stroke-width="2"/><path d="M5 20q6 8 0 8t0-8z" fill="#8fdcf8" stroke="#468"/>',
  fan: '<path d="M1 0l8 6v16l-8 6z" fill="#bfe6fa" stroke="#1b6fb0" stroke-width="1.500"/><path d="M1 7l8 3M1 14h8M1 21l8-3" stroke="#1b6fb0" stroke-width="1.500"/><path d="M13 9q4-4 8 0t7 0M13 15q4-4 8 0t7 0M13 21q4-4 8 0t7 0" fill="none" stroke="#2490d8" stroke-width="2"/>',
  cyc: '<path d="M11 3a11.500 11.500 0 0 0-5 18" fill="none" stroke="#ee1c25" stroke-width="4"/><path d="M1 23l13 4-4-11z" fill="#ee1c25"/><path d="M17 25a11.500 11.500 0 0 0 5-18" fill="none" stroke="#1b7fcb" stroke-width="4"/><path d="M27 5l-13-4 4 11z" fill="#1b7fcb"/>' + waves(8, 10, '#333'),
  thers: ther(6, '#aaa', '#ccc') + ther(22, '#ee1c25', '#1b6fb0') + '<path d="M12 1v26M16 1v26" stroke="#444" stroke-dasharray="2 1.500"/>',
  lAir: loop(waves(8, 10, '#222')), lDrop: loop('<path d="M15 6q8 8 4 13-5 5-9 0-2-5 3-7-1 3 1 4z" fill="#444"/>'), lHC: loop('<path d="M9 6q6 8 3 13-3 3-6 0-2-5 3-13z" fill="#222"/><path d="M14 14h10M16.500 10l5 8M21.500 10l-5 8" stroke="#555" stroke-width="2"/>'),
  AIR: badge('AIR', '#1b75bc', '#ee1c25'), DOAS: badge('DOAS', '#1b75bc', '#ee1c25'), HC: badge('H C', '#1b75bc', '#ee1c25'), SHW: badge('SHW', '#fff', '#ee1c25'),
  tank: '<rect x="8" y="1" width="13" height="26" rx="4" fill="#ee1c25" stroke="#522"/><ellipse cx="14.500" cy="4" rx="6.500" ry="3.500" fill="#fff" stroke="#555"/><path d="M14.500 13q6 9 0 9t0-9z" fill="#8fdcf8" stroke="#468"/>',
  inv: '<path d="M0 8h28M0 14h28M0 20h28" stroke="#222" stroke-width="2"/><rect x="2" y="4" width="24" height="20" fill="#5a58a8" stroke="#222" stroke-width="1.500"/><path d="M2 24l24-20" stroke="#222" stroke-width="1.500"/><path d="M5 8h7M5 11h7M16 19q2-4 4 0t4 0" fill="none" stroke="#e8e060" stroke-width="1.500"/>',
  pv: '<rect x="5" y="1" width="18" height="26" fill="#45468e" stroke="#223"/><path d="M9.500 1v26M14 1v26M18.500 1v26M5 7h18M5 13h18M5 19h18" stroke="#8a8ac8"/><path d="M15 4l-6 12h4l-2 9 8-12h-4l3-9z" fill="#ffe11a" stroke="#554"/>',
  os: `<g transform="translate(3 1) scale(.8 .93)">${cube('#4aa3dc', '#1c74b8', '#2b86cc', txt('O', 8, 22, 13, '#0d4a80', 'sans') + txt('S', 20, 22, 13, '#0d4a80', 'sans'))}</g>`,
  eP: e('#cf2127', cross2('#1b90d8')), eF: e('#5a5aa0', bolt), eB: e('#1b7fcb', cross2('#d8202a')),
  win: rect(1, 10, 24, 17, '#7fd0f0') + '<path d="M1 1h23l4 11h-24z" fill="#c9442e" stroke="#222"/><path d="M1 1h23l1 3h-23z" fill="#1b7fcb"/><path d="M6 5l1 7M11 5l1 7M16 5l1 7M21 5l1 7" stroke="#fff" stroke-width="2"/><path d="M14 22l6-5" stroke="#fff" stroke-width="2"/>',
  play123: play(14, 9, 9) + txt('123', 14, 28, 10.500, '#111', '', 23), blindsP: '<path d="M1 1l11 4M1 9l11 4M1 17l11 4M1 24l11 4" stroke="#322" stroke-width="5"/><path d="M2 1.500l9 3M2 9.500l9 3M2 17.500l9 3M2 24.500l9 3" stroke="#c98a4a" stroke-width="3"/>' + P(20, 26),
  clockP: '<circle cx="6" cy="7" r="6" fill="#19a4e6" stroke="#245"/><path d="M6 7v-7" stroke="#222" stroke-width="2"/><path d="M14 9a7 7 0 0 1 14 0z" fill="#ee1c25"/><path d="M18 9l9-9" stroke="#333" stroke-width="2"/>' + P(19, 27),
  redP: ring(10, 10) + P(19, 27), ringPlay: ring(10, 10) + play(18, 18, 9), coilP: '<path d="M2 18v-15q2-4 4 0v15q2 4 4 0v-15q2-4 4 0v12" fill="none" stroke="#e2343c" stroke-width="2.600"/><path d="M17 14v-11q2-4 4 0v8M24 10v-7q2-4 4 0v12" fill="none" stroke="#59b8e6" stroke-width="2.200"/>' + P(20, 28),
  rEUI: res(txt('EUI', 14, 25, 10, '#111', '', 23)), r123: res(txt('123', 14, 26, 10.500, '#111', '', 23)), rTab: res('<path d="M3 20l11-4 11 4-5 3h-12z" fill="#fbb040" stroke="#432"/><path d="M3 20v8M25 20v8M8 23v3M20 23v3" stroke="#543"/>'), rAir: res('<path d="M1 19q6-4 12 0t13 0M1 23q6-4 12 0t13 0M1 27q6-4 12 0t13 0" fill="none" stroke="#666"/>'),
  rMan: res('<path d="M14 13l3 3 6 3-1 2-5-1 3 8h-3l-3-5-3 5h-3l3-8-5 1-1-2 6-3z" fill="#fbb040" stroke="#654"/>'), rRoom: res('<path d="M2 18l8-3h9l7 3v7l-7 3h-10l-7-3z" fill="#fbb040" stroke="#432"/><path d="M5 20l6 2v4l-6-2zM23 20l-6 2v4l6-2z" fill="#875"/>'),
  cube1: cube('#fbb040', '#ee1c25', '#fdc060', '<path d="M14 3l7 3-7 4-7-4z" fill="#1b7fcb" stroke="#222"/><path d="M1 14v7l13 7v-7z" fill="#f26522" stroke="#222"/><path d="M27 14v7l-13 7v-7z" fill="#fff200" stroke="#222"/>'),
  cube2: '<path d="M14 14l13 6-13 8-13-8z" fill="#1b75bc" stroke="#222"/><path d="M14 8l13 6-13 6-13-6z" fill="#ee1c25" stroke="#222"/><path d="M14 0l13 6-13 7-13-7zM1 6v15M27 6v15M14 0v28" fill="none" stroke="#222" stroke-width="1.500"/>',
  table: rect(1, 1, 26, 26, '#2aa5e0') + '<path d="M1 1h26v7h-26z"/><path d="M9.500 8v19M18.500 8v19" stroke="#111" stroke-width="1.500"/><path d="M3 12h23M3 17h23M3 22h23" stroke="#c22" stroke-width="2" stroke-dasharray="5 4"/>',
  sect: rect(7, 0, 14, 9, '#ee1c25') + rect(7, 9, 14, 8, '#fbb040') + rect(7, 17, 14, 11, '#1b86d0') + '<path d="M7 14h14" stroke="#ff3" stroke-width="3"/><path d="M-1 14.500h30" stroke="#222" stroke-dasharray="6 1.500"/>',
  AD: comfort('AD'), UTCI: comfort('UTCI'), PMV: comfort('PMV'), MTX: res(txt('MTX', 14, 27, 11, '#111', '', 27), '#fff'),
  map: '<path d="M0 17l14-9 14 6-13 14z" fill="#fff" stroke="#444" stroke-width="1.500"/><path d="M5 17l9-6 6 3-8 9z" fill="#e9907a"/><path d="M10 14l4-3 4 2-3 4z" fill="#4a6fb0"/><path d="M15 27l9-10" stroke="#e55" stroke-width="3"/><path d="M0 17v-6l15-11 13 8v6M0 11l14 5 14-8M14 16v12" fill="none" stroke="#888"/>',
  winC: rect(3, 2, 7, 25, '#12a8f0') + rect(10, 2, 8, 25, '#fff', 'stroke="#6cf"') + rect(18, 2, 7, 25, '#12a8f0'), winS: rect(3, 2, 8, 24, '#12a8f0') + steps(18),
  opM: rect(9, 1, 9, 27, '#fbb03b'), noM: rect(9, 1, 8, 27, '#c4b596'), glM: rect(9, 0, 9, 28, '#1b75bc'), shM: '<path d="M13 0v28" stroke="#222" stroke-width="1.500" stroke-dasharray="3 1.500"/>',
  frame: rect(9, 0, 9, 18, '#1b75bc') + rect(4, 18, 19, 9, '#ccc'), wiM: rect(9, 1, 8, 27, '#12a8f0'), blM: steps(11), cuG: rect(10, 1, 8, 25, '#cfe8fb', 'stroke="#5ab0e8"'), veg: '<path d="M2 10l4-6M5 12l5-10M10 12l2-9M14 12l5-10M18 12l7-8M22 12l4-4M1 5h8M12 6h10M18 4h9" stroke="#0fa05a" stroke-width="2.400"/>' + rect(1, 13, 26, 8, '#fbab45'),
  dyn: rect(3, 2, 8, 24, '#1b6cb5') + rect(11, 2, 6, 24, '#fff', 'stroke="#6cf"') + rect(17, 2, 8, 24, '#12a8f0'), gapM: rect(9, 0, 9, 28, '#fff', 'stroke="#3ab4ef" stroke-width="1.800" stroke-dasharray="5 .7"')
};
const svg = k => `<svg viewBox="0 0 28 28">${icons[k] || ''}</svg>`;
const label = (s, w) => `<span class="t" data-w="${w}">${s}</span>`;

// ---------- menus and tabs ----------
document.getElementById('menubar').innerHTML = [['File', 23], ['Edit', 26], ['View', 32], ['Display', 50], ['Solution', 56], ['Help', 32], ['MetaHopper', 85], ['Speckle 2', 63], ['HONEYBEE_EXAMPLE_FINAL*', 194]].map(a => label(...a)).join('');
document.getElementById('tabs').innerHTML = [['Params', 48], ['Maths', 42], ['Sets', 27], ['Vector', 43], ['Curve', 38], ['Surface', 50], ['Mesh', 36], ['Intersect', 57], ['Transform', 68], ['Display', 49], ['Rhino', 40], ['Kangaroo2', 74], ['Pollination', 72], ['Honeybee', 69], ['Ladybug', 57], ['Ironbug', 54], ['HB-Radiance', 88], ['HB-Energy', 72], ['MetaHopper', 85], ['Dragonfly', 66], ['Elefront (R6)', 83], ['Speckle 2', 63]]
  .map(([s, w]) => `<div class="tab${s === 'HB-Energy' ? ' on' : ''}" style="width:${w + 21.35}px">${label(s, w)}</div>`).join('');

// ---------- ribbon: [caption, caption width, panel width, clusters of columns] ----------
const arrow = '<svg viewBox="0 0 9 11"><path d="M4.500 0v10M0 5.500l4.500 4.500 4.500-4.500z" fill="#999" stroke="#999" stroke-width="1.500"/></svg>';
document.getElementById('ribbon').innerHTML = [
  ['0 :: Basic Properties', 102, 286, 'barsG barsO attr1 attr2|housePlus barsR house blocks2|blocks barsB winbrick cardG|brick soil'],
  ['1 :: Constructions', 92, 250, 'cardB cardT|decC decCS decCSI decM|appCS appO appS appW|opC shC'],
  ['2 :: Schedules', 72, 215, 'sliders cardW|calX cal123|calP calPD|calC calFI calS calW'],
  ['3 :: Loads', 50, 273, 'houseP houseX|manP sunP bulbP therP|washer vent bulb man gear tap thermo fan'],
  ['4 :: HVAC', 50, 274, 'cyc thers|lAir AIR|lDrop DOAS|lHC HC|tank SHW|inv pv'],
  ['5 :: Simulate', 64, 238, 'os -|eP eF win eB|play123 blindsP clockP ringPlay redP coilP'],
  ['6 :: Result', 51, 203, 'rEUI r123 rTab rAir rMan rRoom|cube1 cube2|table sect'],
  ['7 :: Thermal Map', 88, 121, 'AD PMV UTCI -|MTX map']
].map(([s, w, pw, cl]) => `<div class="group" style="width:${pw}px"><div class="icons">${cl.split('|').map(c => `<div class="cluster">${c.split(' ').map(svg).join('')}</div>`).join('')}</div><div class="caption">${label(s, w)}${arrow}</div></div>`).join('');

// ---------- constructions drop-down ----------
const cell = ([i, s, w]) => `<div>${svg(i)}${label(s, w)}</div>`;
document.getElementById('items').innerHTML = [
  [['cardB', 'HB Search Constructions', 165], ['cardT', 'HB Search Materials', 135]], 0,
  [['decC', 'HB Deconstruct Construction', 194], ['decCS', 'HB Deconstruct ConstructionSet', 216]],
  [['decCSI', 'HB Deconstruct ConstructionSet Interior', 269], ['decM', 'HB Deconstruct Material', 164]], 0,
  [['appCS', 'HB Apply ConstructionSet', 174], ['appO', 'HB Apply Opaque Construction', 211]],
  [['appS', 'HB Apply Shade Construction', 198], ['appW', 'HB Apply Window Construction', 213]], 0,
  [['opC', 'HB Opaque Construction', 167], ['shC', 'HB Shade Construction', 155]],
  [['winC', 'HB Window Construction', 169], ['winS', 'HB Window Construction Shade', 216]], 0,
  [['opM', 'HB Opaque Material', 137], ['noM', 'HB Opaque Material No Mass', 200]], 0,
  [['glM', 'HB Glass Material', 117], ['shM', 'HB Shade Material', 125]],
  [['frame', 'HB Window Frame', 125], ['wiM', 'HB Window Material', 139]], 0,
  [['blM', 'HB Blind Material', 118], ['cuG', 'HB Custom Window Gap Material', 225]],
  [['veg', 'HB Vegetation Material', 157], ['dyn', 'HB Window Construction Dynamic', 233]],
  [['gapM', 'HB Window Gap Material', 170]]
].map(r => r ? `<div class="item-row">${r.map(cell).join('')}</div>` : '<div class="gap"></div>').join('');

document.querySelectorAll('[data-icon]').forEach(n => { n.innerHTML = icons[n.dataset.icon]; });

// Track each label so that it fills its nominal width.
document.querySelectorAll('.t[data-w]').forEach(n => {
  const w = +n.dataset.w, k = n.textContent.length;
  n.style.letterSpacing = (w - n.offsetWidth) / k + 'px';
});
```
